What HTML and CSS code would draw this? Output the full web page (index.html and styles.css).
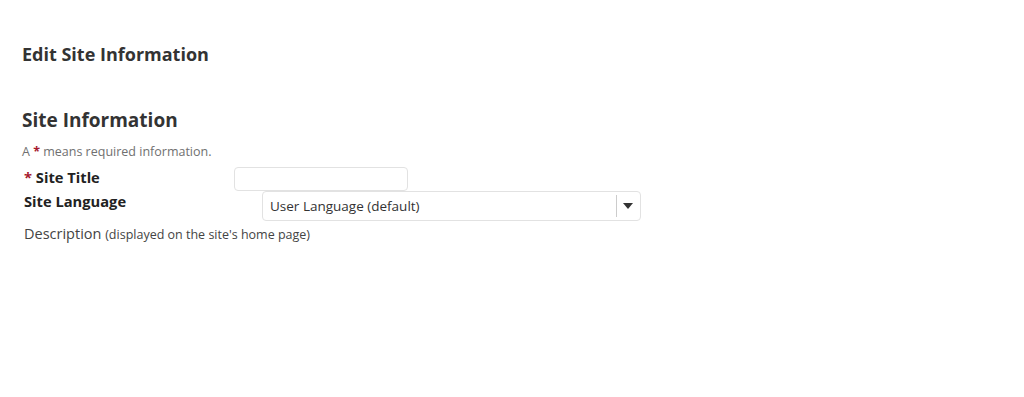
FILE: index.html
```html
<!DOCTYPE html>
<html lang="en">
<head>
<meta charset="UTF-8">
<meta name="viewport" content="width=device-width, initial-scale=1.0">
<title>Edit Site Information</title>
<link rel="stylesheet" href="styles.css">
</head>
<body>
<div class="page">
  <h1 class="page-title">Edit Site Information</h1>

  <h2 class="section-title">Site Information</h2>
  <p class="required-note">A <span class="req">*</span> means required information.</p>

  <div class="form-row">
    <label class="field-label title-label" for="title"><span class="req">*</span> Site Title</label>
    <input type="text" id="title" class="text-input">
  </div>

  <div class="form-row">
    <label class="field-label lang-label">Site Language</label>
    <div class="select-box">
      <span class="select-value">User Language (default)</span>
      <span class="select-divider"></span>
      <span class="select-arrow"></span>
    </div>
  </div>

  <div class="desc-label">Description <span class="hint">(displayed on the site's home page)</span></div>
</div>
</body>
</html>
```

FILE: styles.css
```css
body {
    margin: 0;
    padding: 0;
    font-family: "Open Sans", sans-serif;
    background-color: #fff;
    color: #333;
  }

  .page {
    padding: 42px 22px 0 22px;
  }

  .page-title {
    margin: 0;
    font-size: 18px;
    line-height: 24px;
    font-weight: bold;
  }

  .section-title {
    margin: 40px 0 0 0;
    font-size: 19px;
    line-height: 28px;
    font-weight: bold;
  }

  .required-note {
    margin: 10px 0 0 0;
    font-size: 12.5px;
    line-height: 16px;
    color: #707070;
  }

  .req {
    color: #a6192e;
    font-weight: bold;
  }

  .form-row {
    display: flex;
    align-items: flex-start;
    padding-left: 2px;
  }

  .form-row:first-of-type {
    margin-top: 7px;
  }

  .field-label {
    font-size: 14.7px;
    line-height: 20px;
    font-weight: bold;
    color: #222;
  }

  .title-label {
    width: 210px;
  }

  .lang-label {
    width: 238px;
  }

  .text-input {
    margin: 0;
    width: 174px;
    height: 24px;
    box-sizing: border-box;
    border: 1px solid #e2e2e2;
    border-radius: 4px;
    outline: none;
  }

  .select-box {
    width: 379px;
    height: 30px;
    box-sizing: border-box;
    border: 1px solid #e2e2e2;
    border-radius: 4px;
    display: flex;
    align-items: center;
    padding-left: 7px;
  }

  .select-value {
    flex: 1;
    font-size: 13.5px;
    color: #333;
  }

  .select-divider {
    width: 1px;
    height: 22px;
    background-color: #ccc;
  }

  .select-arrow {
    margin: 0 7px 0 6px;
    width: 0;
    height: 0;
    border-left: 5px solid transparent;
    border-right: 5px solid transparent;
    border-top: 6px solid #333;
  }

  .desc-label {
    margin-top: 3px;
    padding-left: 2px;
    font-size: 14.5px;
    line-height: 20px;
    color: #444;
  }

  .hint {
    font-size: 12.5px;
  }
```
